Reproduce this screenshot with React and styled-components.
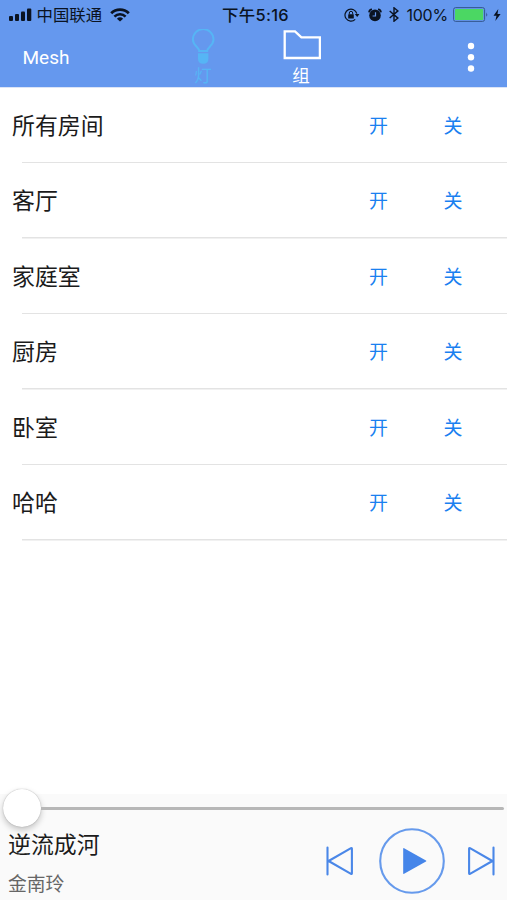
import styled, { createGlobalStyle } from "styled-components";

const GlobalStyle = createGlobalStyle`
  * {
    box-sizing: border-box;
  }

  body {
    margin: 0;
    background: #fff;
    font-family: Inter, "Noto Sans CJK SC", sans-serif;
  }
`;

const Screen = styled.div`
  display: flex;
  flex-direction: column;
  width: 507px;
  height: 900px;
  overflow: hidden;
  background: #fff;
`;

const Header = styled.header`
  height: 87px;
  flex: none;
  background: #6598ee;
  box-shadow: 0 1px 0 #dbe4f6;
`;

const StatusBar = styled.div`
  display: grid;
  grid-template-columns: 1fr auto 1fr;
  align-items: center;
  height: 29px;
  padding: 0 6px 0 9px;
  color: #0a1322;
  line-height: 20px;
  white-space: nowrap;

  svg {
    display: block;
    flex: none;
  }
`;

const StatusGroup = styled.div`
  display: flex;
  align-items: center;
  justify-content: ${({ $end }) => ($end ? "flex-end" : "flex-start")};
`;

const Carrier = styled.span`
  margin: 0 8px 0 4.5px;
  font-size: 16.4px;
`;

const Clock = styled.span`
  padding-left: 1px;
  font-size: 16.4px;
  font-weight: 500;
  letter-spacing: 0.35px;
`;

const Percent = styled.span`
  margin: 0 5px 0 7px;
  font-size: 16px;
  letter-spacing: -0.2px;
`;

const NavBar = styled.nav`
  display: flex;
  align-items: flex-start;
  height: 58px;
  color: #fff;
`;

const AppName = styled.span`
  width: 154px;
  padding-left: 22.5px;
  font-family: Roboto, sans-serif;
  font-size: 19px;
  line-height: 58px;
`;

const Tab = styled.a`
  display: flex;
  flex-direction: column;
  align-items: center;
  width: 98px;
  color: ${({ $active }) => ($active ? "#56b5f5" : "#fff")};
  font-size: 17.5px;
  line-height: 20px;

  svg {
    display: block;
    height: 37px;
  }
`;

const MenuButton = styled.button`
  width: 40px;
  margin: 12px 16px 0 auto;
  padding: 0;
  border: 0;
  background: none;

  svg {
    display: block;
    margin: 0 auto;
  }
`;

const RoomList = styled.ul`
  flex: 1;
  margin: 0;
  padding: 0.5px 0 0;
  list-style: none;
`;

const Room = styled.li`
  display: flex;
  align-items: center;
  height: 75.5px;
  padding: 1px 35px 0 12px;
  background: linear-gradient(#e3e3e3, #e3e3e3) 22px 100% / 100% 1.5px no-repeat;
`;

const RoomName = styled.span`
  flex: 1;
  color: #1b1b1b;
  font-size: 22.9px;
  line-height: 32px;
`;

const Switch = styled.button`
  width: 38px;
  margin-left: 36.5px;
  padding: 2px 0 0;
  border: 0;
  background: none;
  color: #1a80f0;
  font: inherit;
  font-size: 19px;
  line-height: 32px;
`;

const Player = styled.footer`
  height: 106px;
  flex: none;
  background: #fafafa;
`;

const Slider = styled.div`
  display: flex;
  align-items: center;
  height: 29px;
  padding: 0 3px;
`;

const Thumb = styled.div`
  width: 38px;
  height: 38px;
  flex: none;
  margin-top: -1px;
  border-radius: 50%;
  background: #fff;
  box-shadow: 0 0 1px rgba(0, 0, 0, 0.35), 0 3px 6px rgba(0, 0, 0, 0.22);
`;

const Track = styled.div`
  flex: 1;
  height: 2.5px;
  border-radius: 0 2px 2px 0;
  background: #b7b7b7;
`;

const PlayerBody = styled.div`
  display: flex;
  justify-content: space-between;
  padding: 0 12.5px 0 8px;
`;

const Song = styled.div`
  padding-top: 6px;
`;

const SongTitle = styled.div`
  color: #1b1b1b;
  font-size: 22.9px;
  line-height: 32px;
`;

const Artist = styled.div`
  margin-top: 10px;
  color: #666;
  font-size: 18.8px;
  line-height: 28px;
`;

const Controls = styled.div`
  display: flex;
  align-items: center;
  height: 75px;

  svg {
    display: block;
  }
`;

const ControlButton = styled.button`
  margin: ${({ $margin }) => $margin || "0"};
  padding: 0;
  border: 0;
  background: none;
`;

const ROOMS = ["所有房间", "客厅", "家庭室", "厨房", "卧室", "哈哈"];

const SignalIcon = () => (
  <svg width="23" height="13" fill="currentColor">
    <rect x="0" y="8" width="4" height="5" rx="1" />
    <rect x="6" y="6" width="4" height="7" rx="1" />
    <rect x="12" y="3.5" width="4" height="9.5" rx="1" />
    <rect x="18" y="0.5" width="4.3" height="12.5" rx="1" />
  </svg>
);

const WifiIcon = () => (
  <svg width="20" height="14" viewBox="0 0 20 14" fill="none" stroke="currentColor">
    <path d="M1.2 5.2A12.4 12.4 0 0 1 18.8 5.2" strokeWidth="2.8" />
    <path d="M4.4 8.7A7.8 7.8 0 0 1 15.6 8.7" strokeWidth="2.5" />
    <path d="M10 13.6 6.9 10.7A4.5 4.5 0 0 1 13.1 10.7Z" fill="currentColor" stroke="none" />
  </svg>
);

const RotationLockIcon = () => (
  <svg width="16" height="14" viewBox="0 0 16 14" fill="none" stroke="currentColor">
    <path d="M12.8 5.6A6 6 0 1 0 11.2 11.4" strokeWidth="1.2" />
    <path d="M10.8 6h4.6l-2.2 3Z" fill="currentColor" stroke="none" />
    <rect x="4.2" y="6.2" width="5.6" height="4.3" rx="0.6" fill="currentColor" stroke="none" />
    <path d="M5.3 6.4V5a1.7 1.7 0 0 1 3.4 0v1.4" strokeWidth="1" />
  </svg>
);

const AlarmIcon = () => (
  <svg width="14" height="14" viewBox="0 0 14 14">
    <circle cx="7" cy="7.4" r="5.8" fill="currentColor" />
    <path d="M1 4.3A3.2 3.2 0 0 1 4 1.4M10 1.4a3.2 3.2 0 0 1 3 2.9" fill="none" stroke="currentColor" strokeWidth="1.7" />
    <path d="M7.5 4.2V8H4.6" fill="none" stroke="#6598ee" strokeWidth="1.2" />
  </svg>
);

const BluetoothIcon = () => (
  <svg width="10" height="15" viewBox="0 0 10 15" fill="none" stroke="currentColor" strokeWidth="1.4">
    <path d="m.7 4 8.2 7.1L5 14.2V.8l3.9 3.1L.7 11" />
  </svg>
);

const BatteryIcon = () => (
  <svg width="36" height="15" viewBox="0 0 36 15">
    <rect x="0.6" y="0.6" width="31" height="13.8" rx="2" fill="none" stroke="#34588f" strokeWidth="1" />
    <rect x="2" y="2" width="28.2" height="11" rx="0.6" fill="#4bd763" />
    <path d="M33.3 5.2q1.8 2.3 0 4.6Z" fill="#2c4e85" />
  </svg>
);

const BoltIcon = () => (
  <svg width="8" height="12" viewBox="0 0 8 12" fill="currentColor">
    <path d="M5.3 0 .5 6.8h3L2.3 12 7.6 4.9H4.5Z" />
  </svg>
);

const BulbIcon = () => (
  <svg width="26" height="37" viewBox="0 0 26 37" fill="none" stroke="currentColor">
    <path d="M9.2 22C9.2 18.3 2.9 16.5 2.9 10.4a10.3 10.3 0 0 1 20.6 0c0 6.1-6.3 7.9-6.3 11.6Z" strokeWidth="2" />
    <path d="M8 24.2h10.4v5.3q0 5.3-5.2 5.3T8 29.5Z" fill="currentColor" stroke="none" />
  </svg>
);

const FolderIcon = () => (
  <svg width="40" height="37" viewBox="-2.4 0 40 37" fill="none" stroke="#fff" strokeWidth="2.3">
    <path d="M1.3 29V2.3H11.6L18 8.4h18.5V29Z" />
  </svg>
);

const MoreIcon = () => (
  <svg width="8" height="34" viewBox="0 0 8 34" fill="#fff">
    <circle cx="4" cy="5" r="3.2" />
    <circle cx="4" cy="16.3" r="3.2" />
    <circle cx="4" cy="27.5" r="3.2" />
  </svg>
);

const SkipIcon = ({ flip }) => (
  <svg width="28" height="30" viewBox="0 0 28 30" fill="none" stroke="#4a87e8" strokeWidth="2.1" strokeLinecap="round" strokeLinejoin="round">
    <g transform={flip ? "translate(28 0) scale(-1 1)" : undefined}>
      <path d="M1.5 1.5v27M2.6 15 25 2.1q.9-.5.9.6v24.6q0 1.1-.9.6Z" />
    </g>
  </svg>
);

const PlayIcon = () => (
  <svg width="66" height="66" viewBox="0 0 66 66">
    <circle cx="33" cy="33" r="31.8" fill="none" stroke="#669aec" strokeWidth="2.1" />
    <path d="M24.2 20.7q0-1 .9-.5L47 32.6q.7.4 0 .8L25.1 45.8q-.9.5-.9-.5Z" fill="#4585e9" />
  </svg>
);

const RightStatus = styled(StatusGroup)`
  > svg:nth-child(2) {
    margin: 0 7px 0 8px;
  }

  > svg:last-child {
    margin-left: 4px;
  }
`;

const App = () => (
  <>
    <GlobalStyle />
    <Screen>
      <Header>
        <StatusBar>
          <StatusGroup>
            <SignalIcon />
            <Carrier>中国联通</Carrier>
            <WifiIcon />
          </StatusGroup>
          <Clock>下午5:16</Clock>
          <RightStatus $end>
            <RotationLockIcon />
            <AlarmIcon />
            <BluetoothIcon />
            <Percent>100%</Percent>
            <BatteryIcon />
            <BoltIcon />
          </RightStatus>
        </StatusBar>
        <NavBar>
          <AppName>Mesh</AppName>
          <Tab $active>
            <BulbIcon />
            灯
          </Tab>
          <Tab>
            <FolderIcon />
            组
          </Tab>
          <MenuButton>
            <MoreIcon />
          </MenuButton>
        </NavBar>
      </Header>
      <RoomList>
        {ROOMS.map((room) => (
          <Room key={room}>
            <RoomName>{room}</RoomName>
            <Switch>开</Switch>
            <Switch>关</Switch>
          </Room>
        ))}
      </RoomList>
      <Player>
        <Slider>
          <Thumb />
          <Track />
        </Slider>
        <PlayerBody>
          <Song>
            <SongTitle>逆流成河</SongTitle>
            <Artist>金南玲</Artist>
          </Song>
          <Controls>
            <ControlButton>
              <SkipIcon />
            </ControlButton>
            <ControlButton $margin="0 21.5px 0 25.5px">
              <PlayIcon />
            </ControlButton>
            <ControlButton>
              <SkipIcon flip />
            </ControlButton>
          </Controls>
        </PlayerBody>
      </Player>
    </Screen>
  </>
);

export default App;
